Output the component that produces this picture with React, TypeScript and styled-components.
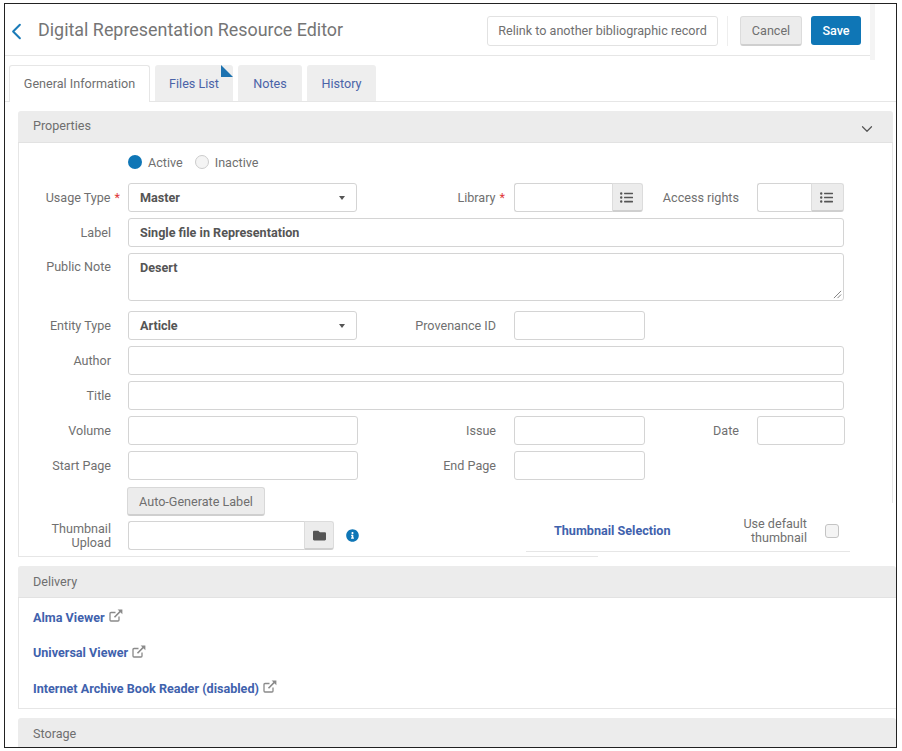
import React from 'react'
import styled, { createGlobalStyle } from 'styled-components'
import { ChevronDown, ChevronLeft } from 'lucide-react'
import { FaFolder, FaInfoCircle, FaListUl } from 'react-icons/fa'

const GlobalStyle = createGlobalStyle`
  html, body {
    margin: 0;
    padding: 0;
    background: #ffffff;
    font-family: Roboto, "Liberation Sans", sans-serif;
    font-size: 12.6px;
    color: #707070;
  }
`

function ExternalIcon() {
  return (
    <ExternalSvg viewBox="0 0 14 13" fill="none" stroke="#8a8a8a" strokeWidth="1.3">
      <path d="M10 7.5V11a1 1 0 0 1-1 1H2a1 1 0 0 1-1-1V4.5a1 1 0 0 1 1-1h4.5" />
      <path d="M5.5 8.2 12 1.6" strokeWidth="1.6" />
      <path d="M8.6 0.6h4.8v4.6z" fill="#8a8a8a" stroke="none" />
    </ExternalSvg>
  )
}

function SelectBox({ value }: { value: string }) {
  return (
    <Select>
      <span>{value}</span>
      <SelectCaret />
    </Select>
  )
}

function Lookup({ button }: { button: number }) {
  return (
    <LookupBox>
      <LookupField />
      <LookupButton $width={button} $iconShift={2}>
        <FaListUl size={13} />
      </LookupButton>
    </LookupBox>
  )
}

export default function App() {
  return (
    <>
      <GlobalStyle />
      <Frame>
        <Top>
          <Header>
            <BackIcon size={27} strokeWidth={1.8} />
            <Title>Digital Representation Resource Editor</Title>
            <HeaderActions>
              <RelinkButton>Relink to another bibliographic record</RelinkButton>
              <ActionDivider />
              <CancelButton>Cancel</CancelButton>
              <SaveButton>Save</SaveButton>
            </HeaderActions>
          </Header>
          <HeaderStrip />
        </Top>

        <Tabs>
          <ActiveTab>General Information</ActiveTab>
          <Tab $width={78}>
            Files List
            <TabMarker />
          </Tab>
          <Tab $width={64}>Notes</Tab>
          <Tab $width={69}>History</Tab>
        </Tabs>

        <Content>
          <PropertiesPanel>
            <PanelHeader>
              Properties
              <PanelChevron size={18} strokeWidth={1.6} />
            </PanelHeader>
            <UpperFields>
              <RadioRow>
                <RadioOn />
                <RadioText>Active</RadioText>
                <RadioOff />
                <RadioText>Inactive</RadioText>
              </RadioRow>
              <FormGrid>
                <FieldLabel>
                  Usage Type<Required>*</Required>
                </FieldLabel>
                <SelectBox value="Master" />
                <MiddleLabel>
                  Library<Required>*</Required>
                </MiddleLabel>
                <Lookup button={31} />
                <MiddleLabel>Access rights</MiddleLabel>
                <Lookup button={33} />

                <FieldLabel>Label</FieldLabel>
                <WideInput>Single file in Representation</WideInput>

                <FieldLabel $top>Public Note</FieldLabel>
                <NoteArea>
                  Desert
                  <ResizeGrip viewBox="0 0 10 10" stroke="#777" strokeWidth="1">
                    <path d="M1 9 9 1M5 9l4-4" />
                  </ResizeGrip>
                </NoteArea>

                <FieldLabel>Entity Type</FieldLabel>
                <SelectBox value="Article" />
                <MiddleLabel>Provenance ID</MiddleLabel>
                <Input $width={131} />
                <GridFiller />

                <FieldLabel>Author</FieldLabel>
                <WideInput />

                <FieldLabel>Title</FieldLabel>
                <WideInput />

                <FieldLabel>Volume</FieldLabel>
                <Input $width={230} />
                <MiddleLabel>Issue</MiddleLabel>
                <Input $width={131} />
                <MiddleLabel>Date</MiddleLabel>
                <Input $width={88} />

                <FieldLabel>Start Page</FieldLabel>
                <Input $width={230} />
                <MiddleLabel>End Page</MiddleLabel>
                <Input $width={131} />
                <GridFiller />
              </FormGrid>
              <GenerateRow>
                <GenerateButton>Auto-Generate Label</GenerateButton>
              </GenerateRow>
            </UpperFields>
            <ThumbnailRow>
              <ThumbnailLabel>
                Thumbnail
                <br />
                Upload
              </ThumbnailLabel>
              <UploadBox>
                <LookupField />
                <LookupButton $width={30} $iconShift={0}>
                  <FolderIcon size={13} />
                </LookupButton>
              </UploadBox>
              <InfoIcon size={13} />
              <ThumbnailSelect>
                <ThumbnailLink>Thumbnail Selection</ThumbnailLink>
                <DefaultLabel>
                  Use default
                  <br />
                  thumbnail
                </DefaultLabel>
                <CheckBox />
              </ThumbnailSelect>
            </ThumbnailRow>
            <PanelBottom />
          </PropertiesPanel>

          <DeliveryPanel>
            <LowerHeader>Delivery</LowerHeader>
            <LinkList>
              <ViewerLink>
                Alma Viewer <ExternalIcon />
              </ViewerLink>
              <ViewerLink>
                Universal Viewer <ExternalIcon />
              </ViewerLink>
              <ViewerLink>
                Internet Archive Book Reader (disabled) <ExternalIcon />
              </ViewerLink>
            </LinkList>
          </DeliveryPanel>

          <StoragePanel>
            <LowerHeader>Storage</LowerHeader>
          </StoragePanel>
        </Content>
      </Frame>
    </>
  )
}

const Frame = styled.div`
  box-sizing: border-box;
  width: 893px;
  height: 745px;
  margin: 3px 0 0 4px;
  border: 1px solid #222222;
  overflow: hidden;
  background: #ffffff;
`

const Top = styled.div`
  display: flex;
  height: 56px;
`

const Header = styled.div`
  box-sizing: border-box;
  display: flex;
  align-items: center;
  width: 865px;
  height: 52px;
  padding: 0 9px 0 0;
  border-bottom: 1px solid #e6e6e6;
`

const HeaderStrip = styled.div`
  width: 5px;
  height: 56px;
  background: #f4f4f4;
`

const BackIcon = styled(ChevronLeft)`
  margin: 3px 0 0 -2px;
  color: #1b7bb8;
  flex: none;
`

const Title = styled.div`
  margin-left: 8px;
  font-size: 17.9px;
  color: #757575;
`

const HeaderActions = styled.div`
  display: flex;
  align-items: center;
  margin-top: 2px;
  margin-left: auto;
`

const BaseButton = styled.div`
  box-sizing: border-box;
  display: flex;
  align-items: center;
  justify-content: center;
  height: 29px;
  border-radius: 3px;
`

const RelinkButton = styled(BaseButton)`
  width: 231px;
  height: 30px;
  border: 1px solid #e2e2e2;
  color: #6f6f6f;
`

const ActionDivider = styled.div`
  width: 1px;
  height: 30px;
  margin: 0 12px 0 9px;
  background: #eeeeee;
`

const CancelButton = styled(BaseButton)`
  width: 62px;
  height: 30px;
  margin-right: 9px;
  background: #ececec;
  border: 1px solid #dcdcdc;
  border-bottom: 2px solid #cfcfcf;
  color: #6f6f6f;
`

const SaveButton = styled(BaseButton)`
  width: 50px;
  background: #0f76b6;
  color: #ffffff;
  font-weight: 500;
`

const Tabs = styled.div`
  box-sizing: border-box;
  display: flex;
  align-items: flex-end;
  gap: 5px;
  height: 42px;
  padding: 0 0 0 4px;
  border-bottom: 1px solid #e6e6e6;
`

const Tab = styled.div<{ $width: number }>`
  position: relative;
  box-sizing: border-box;
  display: flex;
  align-items: center;
  justify-content: center;
  width: ${(p) => p.$width}px;
  height: 36px;
  background: #eeeeee;
  border-radius: 3px 3px 0 0;
  color: #4a63a8;
`

const ActiveTab = styled.div`
  box-sizing: border-box;
  display: flex;
  align-items: center;
  justify-content: center;
  width: 141px;
  height: 37px;
  margin-bottom: -1px;
  padding-bottom: 2px;
  background: #ffffff;
  border: 1px solid #e6e6e6;
  border-bottom: none;
  border-radius: 3px 3px 0 0;
  color: #6f6f6f;
`

const TabMarker = styled.span`
  position: absolute;
  top: 0;
  right: 0;
  width: 12px;
  height: 12px;
  background: #1c72b0;
  clip-path: polygon(0 0, 100% 100%, 0 100%);
`

const Content = styled.div`
  padding: 9px 0 0 13px;
`

const PanelHeader = styled.div`
  position: relative;
  box-sizing: border-box;
  display: flex;
  align-items: center;
  height: 32px;
  padding: 0 0 2px 15px;
  background: #ececec;
  border-bottom: 1px solid #e2e2e2;
  border-radius: 3px 3px 0 0;
  color: #6f6f6f;
`

const LowerHeader = styled(PanelHeader)`
  padding-bottom: 0;
`

const PanelChevron = styled(ChevronDown)`
  position: absolute;
  right: 17px;
  top: 9px;
  color: #555555;
`

const PropertiesPanel = styled.div`
  width: 875px;
`

const UpperFields = styled.div`
  position: relative;
  box-sizing: border-box;
  height: 372px;
  border-left: 1px solid #e6e6e6;

  &::after {
    content: '';
    position: absolute;
    top: 0;
    right: 0;
    width: 1px;
    height: 360px;
    background: #e6e6e6;
  }
`

const RadioRow = styled.div`
  display: flex;
  align-items: center;
  height: 38px;
  padding-left: 109px;
`

const RadioOn = styled.span`
  width: 14px;
  height: 14px;
  border-radius: 50%;
  background: #0f76b6;
`

const RadioOff = styled.span`
  box-sizing: border-box;
  width: 14px;
  height: 14px;
  margin-left: 12px;
  border-radius: 50%;
  border: 1px solid #cccccc;
  background: #f4f4f4;
`

const RadioText = styled.span`
  margin-left: 6px;
  color: #707070;
`

const FormGrid = styled.div`
  display: grid;
  grid-template-columns: 109px 229px 157px 129px 114px 87px;
  grid-auto-rows: minmax(29px, auto);
  row-gap: 6px;
  margin-top: 2px;
`

const FieldLabel = styled.div<{ $top?: boolean }>`
  display: flex;
  align-items: ${(p) => (p.$top ? 'flex-start' : 'center')};
  justify-content: flex-end;
  padding-right: 17px;
  padding-top: ${(p) => (p.$top ? '6px' : '0')};
  color: #707070;
`

const MiddleLabel = styled(FieldLabel)`
  padding-right: 18px;
`

const Required = styled.span`
  margin-left: 4px;
  margin-right: -9px;
  color: #e03a3a;
`

const Input = styled.div<{ $width?: number }>`
  box-sizing: border-box;
  width: ${(p) => (p.$width ? `${p.$width}px` : 'auto')};
  border: 1px solid #d4d4d4;
  border-radius: 3px;
  background: #ffffff;
`

const GridFiller = styled.div`
  grid-column: span 2;
`

const WideInput = styled(Input)`
  grid-column: 2 / -1;
  display: flex;
  align-items: center;
  padding-left: 11px;
  font-weight: 700;
  color: #555555;
`

const NoteArea = styled(Input)`
  position: relative;
  grid-column: 2 / -1;
  height: 48px;
  margin-bottom: 4px;
  padding: 6px 11px;
  font-weight: 700;
  color: #555555;
`

const ResizeGrip = styled.svg`
  position: absolute;
  right: 1px;
  bottom: 1px;
  width: 9px;
  height: 9px;
`

const Select = styled.div`
  box-sizing: border-box;
  display: flex;
  align-items: center;
  justify-content: space-between;
  height: 29px;
  padding: 0 11px;
  border: 1px solid #d4d4d4;
  border-radius: 3px;
  background: #ffffff;
  font-weight: 700;
  color: #555555;
`

const SelectCaret = styled.span`
  width: 0;
  height: 0;
  border-left: 3.5px solid transparent;
  border-right: 3.5px solid transparent;
  border-top: 4px solid #555555;
`

const LookupBox = styled.div`
  display: flex;
  height: 29px;
`

const LookupField = styled.div`
  box-sizing: border-box;
  flex: 1;
  border: 1px solid #d4d4d4;
  border-right: none;
  border-radius: 3px 0 0 3px;
  background: #ffffff;
`

const LookupButton = styled.div<{ $width: number; $iconShift: number }>`
  box-sizing: border-box;
  display: flex;
  align-items: center;
  justify-content: center;
  width: ${(p) => p.$width}px;
  padding-right: ${(p) => p.$iconShift}px;
  background: #ececec;
  border: 1px solid #dcdcdc;
  border-bottom: 2px solid #cfcfcf;
  border-radius: 0 3px 3px 0;
  color: #555555;
`

const FolderIcon = styled(FaFolder)`
  margin-top: 2px;
`

const GenerateRow = styled.div`
  padding: 7px 0 0 108px;
`

const GenerateButton = styled(BaseButton)`
  width: 138px;
  background: #ececec;
  border: 1px solid #d8d8d8;
  border-bottom: 2px solid #cfcfcf;
  color: #6f6f6f;
`

const ThumbnailRow = styled.div`
  box-sizing: border-box;
  display: flex;
  align-items: center;
  height: 41px;
  padding-bottom: 1px;
  border-left: 1px solid #e6e6e6;
`

const ThumbnailLabel = styled.div`
  width: 92px;
  padding-top: 2px;
  text-align: right;
  line-height: 14px;
  color: #707070;
`

const UploadBox = styled(LookupBox)`
  width: 206px;
  margin-left: 17px;
`

const InfoIcon = styled(FaInfoCircle)`
  margin-left: 12px;
  color: #0f76b6;
`

const ThumbnailSelect = styled.div`
  box-sizing: border-box;
  display: flex;
  align-items: center;
  align-self: flex-end;
  width: 324px;
  height: 36px;
  margin: 0 0 3px 167px;
  padding-bottom: 6px;
  border-bottom: 1px solid #e6e6e6;
`

const ThumbnailLink = styled.div`
  margin-left: 28px;
  font-weight: 700;
  color: #3f62ad;
`

const DefaultLabel = styled.div`
  margin-left: auto;
  text-align: right;
  line-height: 14px;
  color: #707070;
`

const CheckBox = styled.span`
  box-sizing: border-box;
  width: 14px;
  height: 14px;
  margin: 0 11px 0 18px;
  border: 1px solid #c4c4c4;
  border-radius: 3px;
  background: #f4f4f4;
`

const PanelBottom = styled.div`
  width: 580px;
  height: 1px;
  background: #e6e6e6;
`

const DeliveryPanel = styled.div`
  margin-top: 9px;
`

const LinkList = styled.div`
  box-sizing: border-box;
  display: flex;
  flex-direction: column;
  gap: 15.5px;
  height: 111px;
  padding: 9px 0 0 14px;
  border-left: 1px solid #e6e6e6;
  border-bottom: 1px solid #e6e6e6;
`

const ViewerLink = styled.div`
  display: flex;
  align-items: center;
  gap: 4px;
  height: 20px;
  font-weight: 700;
  color: #3f62ad;
`

const ExternalSvg = styled.svg`
  width: 14px;
  height: 13px;
  margin-top: -3px;
`

const StoragePanel = styled.div`
  margin-top: 9px;
`
